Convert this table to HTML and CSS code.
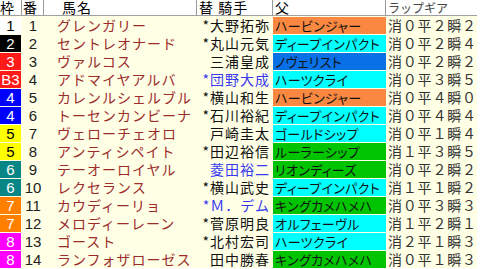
FILE: index.html
```html
<!DOCTYPE html>
<html lang="ja">
<head>
<meta charset="utf-8">
<link rel="stylesheet" href="styles.css">
</head>
<body>
<div class="table">
  <div class="h h-waku">枠</div>
  <div class="h h-ban">番</div>
  <div class="h h-name">馬名</div>
  <div class="h h-jockey">替&nbsp;騎手</div>
  <div class="h h-sire">父</div>
  <div class="h h-gear">ラップギア</div>

  <div class="waku w1">1</div><div class="ban">1</div><div class="name">グレンガリー</div><div class="jockey">*大野拓弥</div><div class="sire s-orange">ハービンジャー</div><div class="gear">消０平２瞬２</div>
  <div class="waku w2">2</div><div class="ban">2</div><div class="name">セントレオナード</div><div class="jockey">*丸山元気</div><div class="sire s-cyan">ディープインパクト</div><div class="gear">消０平２瞬４</div>
  <div class="waku w3">3</div><div class="ban">3</div><div class="name">ヴァルコス</div><div class="jockey">三浦皇成</div><div class="sire s-blue">ノヴェリスト</div><div class="gear">消０平２瞬２</div>
  <div class="waku w3">B3</div><div class="ban">4</div><div class="name">アドマイヤアルバ</div><div class="jockey blue">*団野大成</div><div class="sire s-cyan">ハーツクライ</div><div class="gear">消０平３瞬５</div>
  <div class="waku w4">4</div><div class="ban">5</div><div class="name">カレンルシェルブル</div><div class="jockey">*横山和生</div><div class="sire s-orange">ハービンジャー</div><div class="gear">消０平４瞬０</div>
  <div class="waku w4">4</div><div class="ban">6</div><div class="name">トーセンカンビーナ</div><div class="jockey">*石川裕紀</div><div class="sire s-cyan">ディープインパクト</div><div class="gear">消０平４瞬４</div>
  <div class="waku w5">5</div><div class="ban">7</div><div class="name">ヴェローチェオロ</div><div class="jockey">戸崎圭太</div><div class="sire s-cyan">ゴールドシップ</div><div class="gear">消０平１瞬４</div>
  <div class="waku w5">5</div><div class="ban">8</div><div class="name">アンティシペイト</div><div class="jockey">*田辺裕信</div><div class="sire s-green">ルーラーシップ</div><div class="gear">消１平３瞬５</div>
  <div class="waku w6">6</div><div class="ban">9</div><div class="name">テーオーロイヤル</div><div class="jockey blue">菱田裕二</div><div class="sire s-green">リオンディーズ</div><div class="gear">消０平２瞬２</div>
  <div class="waku w6">6</div><div class="ban">10</div><div class="name">レクセランス</div><div class="jockey">*横山武史</div><div class="sire s-cyan">ディープインパクト</div><div class="gear">消１平１瞬２</div>
  <div class="waku w7">7</div><div class="ban">11</div><div class="name">カウディーリョ</div><div class="jockey blue">*Ｍ．デム</div><div class="sire s-green">キングカメハメハ</div><div class="gear">消０平３瞬３</div>
  <div class="waku w7">7</div><div class="ban">12</div><div class="name">メロディーレーン</div><div class="jockey">*菅原明良</div><div class="sire s-cyan">オルフェーヴル</div><div class="gear">消１平２瞬１</div>
  <div class="waku w8">8</div><div class="ban">13</div><div class="name">ゴースト</div><div class="jockey">*北村宏司</div><div class="sire s-cyan">ハーツクライ</div><div class="gear">消２平１瞬３</div>
  <div class="waku w8">8</div><div class="ban">14</div><div class="name">ランフォザローゼス</div><div class="jockey">田中勝春</div><div class="sire s-green">キングカメハメハ</div><div class="gear">消０平１瞬３</div>
</div>
</body>
</html>
```
FILE: styles.css
```css
html, body {
  margin: 0;
  padding: 0;
  background: #ffffff;
}
body {
  width: 480px;
  height: 269px;
  overflow: hidden;
  font-family: "Noto Sans CJK JP", "DejaVu Sans", sans-serif;
}
.table {
  display: grid;
  width: 477px;
  grid-template-columns: 22px 22px 153px 76px 113px 91px;
  grid-template-rows: 16px;
  grid-auto-rows: 17px;
  row-gap: 1px;
  background: #ffffe6;
  font-size: 14px;
  line-height: 17px;
}
.h {
  background: #ffffff;
  border-bottom: 1px solid #a0a0a0;
  border-right: 1px solid #9a9a9a;
  color: #000;
  font-size: 14px;
  line-height: 15px;
  white-space: nowrap;
}
.h-waku { padding-left: 0; }
.h-ban { padding-left: 1px; }
.h-name { padding-left: 18px; letter-spacing: 1px; }
.h-jockey { padding-left: 2px; letter-spacing: 1px; }
.h-sire { padding-left: 2px; }
.h-gear {
  padding-left: 2px;
  font-size: 12px;
  color: #444;
  border-right: none;
}
.waku {
  margin-right: 1px;
  text-align: center;
  color: #ffffff;
  font-family: "Liberation Sans", "DejaVu Sans", sans-serif;
  font-size: 15px;
}
.w1 { background: #ffffff; color: #000; }
.w2 { background: #000000; }
.w3 { background: #ff1a1a; }
.w4 { background: #0000ff; }
.w5 { background: #ffff00; color: #000; }
.w6 { background: #088585; }
.w7 { background: #ff8000; }
.w8 { background: #ff00ff; }
.ban {
  text-align: center;
  color: #222;
  font-family: "Liberation Sans", "DejaVu Sans", sans-serif;
  font-size: 15px;
}
.name {
  padding-left: 13px;
  color: #9c2b2b;
  letter-spacing: 1px;
  white-space: nowrap;
}
.jockey {
  text-align: right;
  padding-right: 3px;
  color: #111;
  letter-spacing: 1px;
  white-space: nowrap;
}
.jockey.blue { color: #3838f0; }
.sire {
  padding-left: 2px;
  color: #111;
  font-size: 13px;
  letter-spacing: 0.3px;
  font-feature-settings: "palt";
  white-space: nowrap;
}
.s-orange { background: #fa8840; }
.s-cyan { background: #00ffff; }
.s-blue { background: #0a70e6; }
.s-green { background: #00c400; }
.gear {
  padding-left: 2px;
  color: #333;
  letter-spacing: 0.8px;
  white-space: nowrap;
}
```
